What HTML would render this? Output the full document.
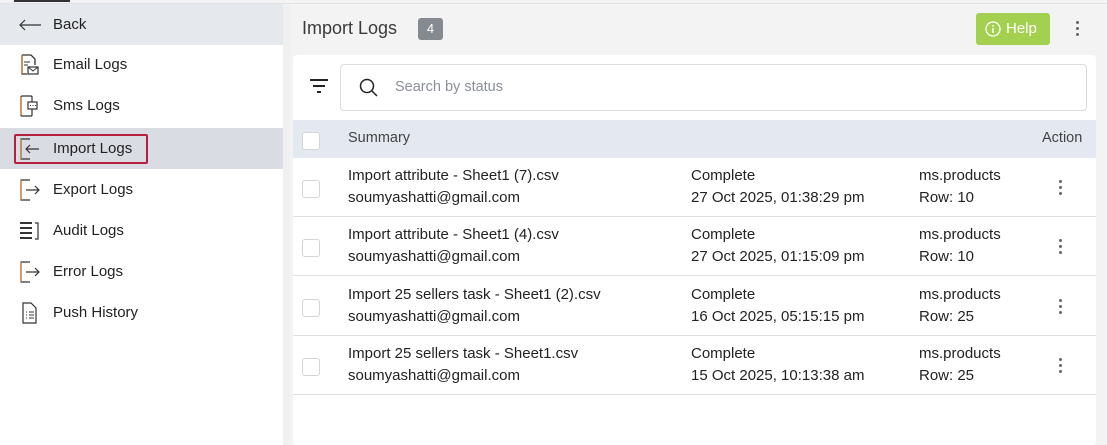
<!DOCTYPE html>
<html><head><style>
*{box-sizing:border-box;margin:0;padding:0}
body{width:1107px;height:445px;overflow:hidden;background:#f3f3f3;font-family:"Liberation Sans",Arial,sans-serif;color:#222;position:relative}
.topline{position:absolute;left:0;top:3px;width:1107px;height:1px;background:#e2e2e2}
.topbar{position:absolute;left:14px;top:0;width:56px;height:2px;background:#333}
.side{position:absolute;left:0;top:4px;width:283px;height:441px;background:#fff}
.item{position:absolute;left:0;width:283px;height:41px;display:flex;align-items:center;font-size:15px;color:#222}
.item svg{position:absolute;left:18px}
.item span{position:absolute;left:53px}
.sb{position:absolute;left:283px;top:4px;width:7px;height:441px;background:#f0f0f0}
.title{position:absolute;left:302px;top:18px;font-size:18px;color:#3a3a3a}
.badge{position:absolute;left:418px;top:18px;width:25px;height:22px;background:#858a90;border-radius:3px;color:#fff;font-size:13px;text-align:center;line-height:22px}
.help{position:absolute;left:976px;top:13px;width:74px;height:32px;background:#a3d14f;border-radius:3px;color:#fff;font-size:15px;line-height:32px;padding-left:30px}
.card{position:absolute;left:293px;top:55px;width:803px;height:390px;background:#fff;border-radius:4px}
.search{position:absolute;left:47px;top:9px;width:747px;height:47px;border:1px solid #dcdcdc;border-radius:4px}
.search span{position:absolute;left:54px;top:14px;font-size:14.5px;color:#8a8f98}
.thead{position:absolute;left:0;top:65px;width:803px;height:38px;background:#e4e8f0;font-size:14.5px;color:#444}
.cb{position:absolute;width:18px;height:18px;border:1px solid #d5d5d5;border-radius:3px;background:#fff}
.row{position:absolute;left:0;width:803px;height:59px;border-bottom:1px solid #ddd;font-size:15px;color:#222}
.row div{position:absolute}
.dots{position:absolute;width:3px}
.dots i{display:block;width:3px;height:3px;background:#666;border-radius:50%;margin-bottom:3px}
</style></head><body>
<div class="topline"></div><div class="topbar"></div>
<div class="side">
 <div class="item" style="top:0;background:#e5e8ec"><svg width="24" height="12" viewBox="0 0 24 12" style="left:19px"><path d="M1 6H22M6 1L1 6L6 11" stroke="#333" fill="none" stroke-width="1.2"/></svg><span>Back</span></div>
 <div class="item" style="top:40px"><svg width="22" height="24" viewBox="0 0 22 24"><path d="M4 2H13L17 6V12M4 2V21H9" stroke="#333" fill="none" stroke-width="1.3"/><path d="M6 9H12M6 12H10" stroke="#333"/><path d="M4 2V21" stroke="#c8772e" stroke-width="1.3"/><rect x="10" y="14" width="10" height="7" fill="none" stroke="#333" stroke-width="1.2"/><path d="M10 14L15 18L20 14" stroke="#333" fill="none"/></svg><span>Email Logs</span></div>
 <div class="item" style="top:81px"><svg width="22" height="24" viewBox="0 0 22 24"><rect x="3" y="2" width="11" height="20" rx="1" fill="none" stroke="#333" stroke-width="1.2"/><path d="M3 3V21" stroke="#c8772e" stroke-width="1.3"/><rect x="10" y="8" width="9" height="7" fill="#fff" stroke="#333" stroke-width="1.2"/><path d="M12 11.5h1M14.5 11.5h1M17 11.5h1" stroke="#333"/></svg><span>Sms Logs</span></div>
 <div class="item" style="top:124px;background:#d9dde3"><div style="position:absolute;left:14px;top:6px;width:134px;height:30px;border:2.5px solid #b5203f;border-radius:2px"></div><svg width="22" height="24" viewBox="0 0 22 24"><path d="M12 2H3V22H12" stroke="#333" fill="none" stroke-width="1.2"/><path d="M3 2V22" stroke="#c8772e" stroke-width="1.2"/><path d="M21 12H8M12 8L8 12L12 16" stroke="#333" fill="none" stroke-width="1.2"/></svg><span>Import Logs</span></div>
 <div class="item" style="top:165px"><svg width="22" height="24" viewBox="0 0 22 24"><path d="M12 2H3V22H12" stroke="#333" fill="none" stroke-width="1.2"/><path d="M3 2V22" stroke="#c8772e" stroke-width="1.2"/><path d="M8 12H21M17 8L21 12L17 16" stroke="#333" fill="none" stroke-width="1.2"/></svg><span>Export Logs</span></div>
 <div class="item" style="top:206px"><svg width="22" height="24" viewBox="0 0 22 24"><path d="M2 4H14M2 9H14M2 14H14M2 19H14" stroke="#333" stroke-width="2"/><path d="M17 4H20V20H17" stroke="#333" fill="none" stroke-width="1.2"/></svg><span>Audit Logs</span></div>
 <div class="item" style="top:247px"><svg width="22" height="24" viewBox="0 0 22 24"><path d="M12 2H3V22H12" stroke="#333" fill="none" stroke-width="1.2"/><path d="M3 2V22" stroke="#c8772e" stroke-width="1.2"/><path d="M8 12H21M17 8L21 12L17 16" stroke="#333" fill="none" stroke-width="1.2"/></svg><span>Error Logs</span></div>
 <div class="item" style="top:288px"><svg width="22" height="24" viewBox="0 0 22 24"><path d="M5 2H13L18 7V22H5Z" stroke="#333" fill="none" stroke-width="1.2"/><path d="M8 11h1M11 11h5M8 14h1M11 14h5M8 17h1M11 17h5" stroke="#333"/></svg><span>Push History</span></div>
</div>
<div class="sb"></div>
<div class="title">Import Logs</div>
<div class="badge">4</div>
<div class="help"><svg width="16" height="16" viewBox="0 0 16 16" style="position:absolute;left:9px;top:8px"><circle cx="8" cy="8" r="7" stroke="#fff" fill="none" stroke-width="1.3"/><path d="M8 7V12M8 4V5.5" stroke="#fff" stroke-width="1.5"/></svg>Help</div>
<div class="dots" style="left:1076px;top:21px"><i></i><i></i><i></i></div>
<div class="card">
 <svg width="20" height="14" viewBox="0 0 20 14" style="position:absolute;left:16px;top:24px"><path d="M1 1H19M4 7H16M8 13H12" stroke="#222" stroke-width="2"/></svg>
 <div class="search"><svg width="20" height="20" viewBox="0 0 20 20" style="position:absolute;left:18px;top:13px"><circle cx="8" cy="8" r="6.5" stroke="#222" fill="none" stroke-width="1.5"/><path d="M13 13L18 18" stroke="#222" stroke-width="1.5"/></svg><span>Search by status</span></div>
 <div class="thead"><div class="cb" style="left:9px;top:12px"></div><div style="position:absolute;left:55px;top:10px">Summary</div><div style="position:absolute;left:749px;top:10px">Action</div></div>
 <div class="row" style="top:103px"><div class="cb" style="left:9px;top:22px"></div><div style="left:55px;top:9px">Import attribute - Sheet1 (7).csv</div><div style="left:55px;top:31px">soumyashatti@gmail.com</div><div style="left:398px;top:9px">Complete</div><div style="left:398px;top:31px">27 Oct 2025, 01:38:29 pm</div><div style="left:626px;top:9px">ms.products</div><div style="left:626px;top:31px">Row: 10</div><div class="dots" style="left:766px;top:22px"><i></i><i></i><i></i></div></div>
 <div class="row" style="top:162px"><div class="cb" style="left:9px;top:22px"></div><div style="left:55px;top:9px">Import attribute - Sheet1 (4).csv</div><div style="left:55px;top:31px">soumyashatti@gmail.com</div><div style="left:398px;top:9px">Complete</div><div style="left:398px;top:31px">27 Oct 2025, 01:15:09 pm</div><div style="left:626px;top:9px">ms.products</div><div style="left:626px;top:31px">Row: 10</div><div class="dots" style="left:766px;top:22px"><i></i><i></i><i></i></div></div>
 <div class="row" style="top:221px;height:60px"><div class="cb" style="left:9px;top:23px"></div><div style="left:55px;top:10px">Import 25 sellers task - Sheet1 (2).csv</div><div style="left:55px;top:32px">soumyashatti@gmail.com</div><div style="left:398px;top:10px">Complete</div><div style="left:398px;top:32px">16 Oct 2025, 05:15:15 pm</div><div style="left:626px;top:10px">ms.products</div><div style="left:626px;top:32px">Row: 25</div><div class="dots" style="left:766px;top:23px"><i></i><i></i><i></i></div></div>
 <div class="row" style="top:281px"><div class="cb" style="left:9px;top:22px"></div><div style="left:55px;top:9px">Import 25 sellers task - Sheet1.csv</div><div style="left:55px;top:31px">soumyashatti@gmail.com</div><div style="left:398px;top:9px">Complete</div><div style="left:398px;top:31px">15 Oct 2025, 10:13:38 am</div><div style="left:626px;top:9px">ms.products</div><div style="left:626px;top:31px">Row: 25</div><div class="dots" style="left:766px;top:22px"><i></i><i></i><i></i></div></div>
</div>
</body></html>
